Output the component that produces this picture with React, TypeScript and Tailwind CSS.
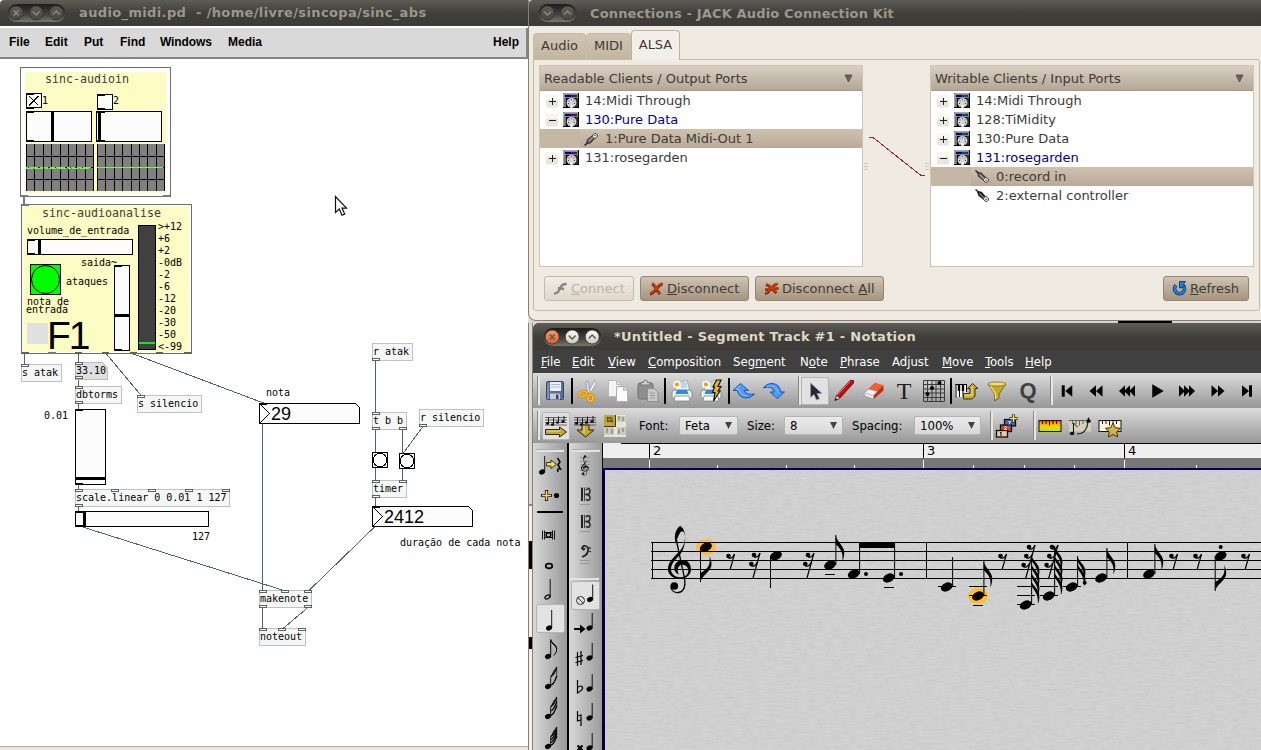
import React from "react";

/* ---------- shared window chrome ---------- */

function WindowButtons({ kinds, active = false }: { kinds: string[]; active?: boolean }) {
  const width = kinds.length * 20 - 2;
  return (
    <svg width={width + 2} height={20} viewBox={`0 0 ${width + 2} 20`} className="shrink-0">
      <defs>
        <linearGradient id="pill" x1="0" y1="0" x2="0" y2="1">
          <stop offset="0" stopColor="#1d1c19" />
          <stop offset="0.6" stopColor="#45443f" />
          <stop offset="1" stopColor="#77766e" />
        </linearGradient>
        <linearGradient id="knobOff" x1="0" y1="0" x2="0" y2="1">
          <stop offset="0" stopColor="#5c5b55" />
          <stop offset="1" stopColor="#484742" />
        </linearGradient>
        <linearGradient id="knobOn" x1="0" y1="0" x2="0" y2="1">
          <stop offset="0" stopColor="#ffffff" />
          <stop offset="1" stopColor="#c9c6bc" />
        </linearGradient>
        <linearGradient id="knobClose" x1="0" y1="0" x2="0" y2="1">
          <stop offset="0" stopColor="#f79a6f" />
          <stop offset="1" stopColor="#e2582b" />
        </linearGradient>
      </defs>
      <rect x="0.5" y="1" width={width} height="18" rx="9" fill="url(#pill)" />
      {kinds.map((kind, i) => {
        const cx = 9.5 + i * 20 - (kinds.length === 3 ? 0.3 : 0);
        const fill = !active ? "url(#knobOff)" : kind === "close" ? "url(#knobClose)" : "url(#knobOn)";
        const stroke = active ? "#5b5a52" : "#8a8980";
        return (
          <g key={kind} transform={`translate(${cx} 10)`}>
            <circle r="7" fill={fill} stroke={active ? "#35342f" : "#33322e"} strokeWidth="0.8" />
            <path
              d={kind === "close" ? "M-2.5 -2.5L2.5 2.5M2.5 -2.5L-2.5 2.5" : kind === "min" ? "M-3.5 -1.5L0 2L3.5 -1.5" : "M-3.5 1.5L0 -2L3.5 1.5"}
              fill="none"
              stroke={stroke}
              strokeWidth="1.5"
            />
          </g>
        );
      })}
    </svg>
  );
}

/* ---------- Pure Data patch ---------- */

const ORIGIN = 59;
const XLET = "#55665a";

type Node = { x: number; y: number; w: number; h: number; text: string; ins: number[]; outs: number[] };

const nodes: Node[] = [
  { x: 21, y: 364, w: 41, h: 18, text: "s atak", ins: [21], outs: [] },
  { x: 75, y: 386, w: 47, h: 18, text: "dbtorms", ins: [75], outs: [75] },
  { x: 137, y: 395, w: 65, h: 18, text: "s silencio", ins: [137], outs: [] },
  { x: 75, y: 489, w: 155, h: 18, text: "scale.linear 0 0.01 1 127", ins: [75, 111, 148, 185, 222], outs: [75] },
  { x: 372, y: 343, w: 41, h: 18, text: "r atak", ins: [], outs: [372] },
  { x: 372, y: 412, w: 35, h: 18, text: "t b b", ins: [372], outs: [372, 399] },
  { x: 419, y: 409, w: 65, h: 18, text: "r silencio", ins: [], outs: [419] },
  { x: 372, y: 480, w: 35, h: 18, text: "timer", ins: [372, 399], outs: [372] },
  { x: 259, y: 590, w: 53, h: 18, text: "makenote", ins: [259, 281, 304], outs: [259, 304] },
  { x: 259, y: 628, w: 47, h: 18, text: "noteout", ins: [259, 278, 298], outs: [] },
];

const labels: [number, number, string][] = [
  [42, 95, "1"], [113, 95, "2"],
  [27, 225, "volume_de_entrada"], [81, 257, "saida~"], [66, 276, "ataques"],
  [27, 296, "nota de"], [26, 304, "entrada"],
  [158, 221, ">+12"], [158, 233, "+6"], [158, 245, "+2"], [158, 257, "-0dB"], [158, 269, "-2"], [158, 281, "-6"],
  [158, 293, "-12"], [158, 305, "-20"], [158, 317, "-30"], [158, 329, "-50"], [158, 341, "<-99"],
  [76, 365, "33.10"], [44, 410, "0.01"], [192, 531, "127"], [266, 387, "nota"], [400, 537, "duração de cada nota"],
];

const wires = [
  [78, 403, 78, 410], [24, 353, 24, 365], [78, 353, 78, 362], [78, 379, 78, 387], [106, 354, 141, 396], [133, 354, 263, 403],
  [78, 484, 78, 490], [78, 506, 78, 512], [79, 526, 285, 591], [262, 423, 262, 590], [375, 361, 375, 413],
  [375, 429, 375, 453], [402, 429, 402, 454], [422, 427, 403, 453], [375, 467, 375, 481], [402, 468, 402, 481],
  [375, 497, 375, 507], [375, 526, 308, 591], [262, 607, 262, 629], [308, 607, 282, 629],
];

const vlines = [0, 8, 17, 25, 34, 42, 50, 59, 67];

function Scope({ x, noisy }: { x: number; noisy: boolean }) {
  return (
    <g>
      <rect x={x} y="144" width="68" height="47" fill="#808080" />
      {vlines.map((v) => <rect key={v} x={x + v} y="144" width="1" height="47" fill="#000" />)}
      {[156, 167, 179].map((y) => <rect key={y} x={x} y={y} width="68" height="1" fill="#000" />)}
      <rect x={x} y="167" width={noisy ? 65 : 66} height="1" fill="#6bfc3a" />
      {noisy && <path d={`M${x + 2} 167.5H${x + 65}`} stroke="#143008" strokeWidth="1" strokeDasharray="1 9 2 3 1 4 2 5" />}
      {noisy && <path d={`M${x} 168.5H${x + 65}`} stroke="#6bfc3a" strokeWidth="1" strokeDasharray="7 1 9 2 3 1" />}
    </g>
  );
}

function Bang({ x, y }: { x: number; y: number }) {
  return (
    <g>
      <rect x={x + 0.5} y={y + 0.5} width="15" height="15" fill="#fcfcfc" stroke="#000" />
      <circle cx={x + 8} cy={y + 8} r="6.8" fill="none" stroke="#000" />
    </g>
  );
}

function NumBox({ x, y }: { x: number; y: number }) {
  return (
    <g fill="none" stroke="#000">
      <path d={`M${x + 0.5} ${y + 0.5}h96l4 4v16h-100z`} fill="#fcfcfc" />
      <path d={`M${x + 1} ${y + 1}l9.5 9.5l-9.5 9.5`} />
      <path d={`M${x} ${y + 1}h8M${x} ${y + 20}h8`} />
    </g>
  );
}

function PatchDrawing() {
  return (
    <svg className="absolute left-0 top-0" width="527" height="687" viewBox="0 59 527 687" shapeRendering="crispEdges">
      <rect x="20.5" y="67.5" width="150" height="129" fill="#fff" stroke="#6e6e6e" />
      <rect x="25" y="72" width="141" height="121" fill="#fcfcc4" />
      <rect x="21" y="195" width="7" height="2" fill="#777788" />
      <rect x="163" y="195" width="7" height="2" fill="#777788" />
      <rect x="23" y="197" width="2" height="9" fill="#777788" />
      <g fill="#fcfcfc" stroke="#000">
        <rect x="26.5" y="93.5" width="15" height="14" />
        <path d="M29 96l9.5 9.5M38.5 96l-9.5 9.5" strokeWidth="1" />
        <rect x="97.5" y="94.5" width="15" height="15" />
        <rect x="26.5" y="111.5" width="65" height="30" />
        <rect x="96.5" y="111.5" width="65" height="30" />
      </g>
      <g fill="#000">
        <rect x="51" y="112" width="3" height="29" />
        <rect x="98" y="112" width="3" height="29" />
        {[26, 97].map((x) => (
          <g key={x}>
            <rect x={x} y={x === 26 ? 93 : 94} width="8" height="2" />
            <rect x={x} y={x === 26 ? 107 : 108} width="8" height="2" />
            <rect x={x} y="111" width="8" height="2" />
            <rect x={x} y="140" width="8" height="2" />
          </g>
        ))}
      </g>
      <Scope x={26} noisy />
      <Scope x={97} noisy={false} />

      <rect x="21.5" y="204.5" width="170" height="149" fill="#fff" stroke="#6e6e6e" />
      <rect x="23" y="206" width="166" height="146" fill="#fcfcc4" />
      <rect x="22" y="204" width="7" height="2" fill="#777788" />
      <rect x="27.5" y="239.5" width="105" height="15" fill="#fcfcfc" stroke="#000" />
      <rect x="38" y="240" width="3" height="14" />
      <rect x="27" y="239" width="8" height="2" />
      <rect x="27" y="253" width="8" height="2" />
      <rect x="30.5" y="264.5" width="30" height="30" fill="#00fc00" stroke="#000" />
      <circle cx="45.5" cy="279.5" r="14" fill="none" stroke="#000" shapeRendering="auto" />
      <rect x="27" y="323" width="21" height="21" fill="#e0e0e0" />
      <rect x="114.5" y="265.5" width="15" height="85" fill="#fcfcfc" stroke="#000" />
      <rect x="115" y="314" width="14" height="3" />
      <rect x="115" y="265" width="7" height="2" />
      <rect x="115" y="349" width="7" height="2" />
      <rect x="138.5" y="225.5" width="17" height="124" fill="#404040" stroke="#000" />
      <rect x="139" y="342" width="16" height="2" fill="#14e814" />
      <g fill="#fff" stroke={XLET}>
        {[22, 75, 102, 130, 156, 184].map((x) => <rect key={x} x={x + 0.5} y="352.5" width="6" height="1" />)}
      </g>
      <rect x="48" y="352" width="8" height="2" fill="#777788" />

      <g stroke={XLET} strokeWidth="1">
        {wires.map(([a, b, c, d]) => <line key={`${a}-${b}-${c}`} x1={a + 0.5} y1={b} x2={c + 0.5} y2={d} />)}
      </g>
      <path d="M75.5 362.5h27l5 5v11.500h-32z" fill="#dfdfdf" stroke="#bcbcbc" />
      <g fill="#fff" stroke={XLET}>
        <rect x="75.500" y="362.5" width="7" height="2" />
        <rect x="75.500" y="376.5" width="7" height="2" />
      </g>
      <rect x="75.500" y="409.5" width="30" height="75" fill="#fcfcfc" stroke="#000" />
      <rect x="76" y="477" width="29" height="3" />
      <rect x="75" y="409" width="8" height="2" />
      <rect x="75" y="483" width="8" height="2" />
      <rect x="75.500" y="511.5" width="133" height="15" fill="#fcfcfc" stroke="#000" />
      <rect x="83" y="512" width="3" height="14" />
      <rect x="75" y="511" width="8" height="2" />
      <rect x="75" y="525" width="8" height="2" />
      <NumBox x={259} y={403} />
      <NumBox x={372} y={506} />
      <Bang x={372} y={452} />
      <Bang x={399} y={453} />
    </svg>
  );
}

function XLets({ node }: { node: Node }) {
  return (
    <>
      {node.ins.map((x) => (
        <i key={`i${x}`} className="absolute h-[3px] w-2 border border-[#55665a] bg-white" style={{ left: x - node.x - 1, top: -1 }} />
      ))}
      {node.outs.map((x) => (
        <i key={`o${x}`} className="absolute h-[3px] w-2 border border-[#55665a] bg-white" style={{ left: x - node.x - 1, top: node.h - 4 }} />
      ))}
    </>
  );
}

function PdWindow() {
  return (
    <section className="flex h-[750px] w-[528px] shrink-0 flex-col bg-white">
      <header className="flex h-[26px] items-center rounded-tl bg-linear-to-b from-[#5d5c56] via-[#403f3a] to-[#3c3b37] pl-[7px] text-[13px] font-bold text-[#9b978c]">
        <WindowButtons kinds={["close", "min", "max"]} />
        <h1 className="ml-[12px] font-['DejaVu_Sans',sans-serif] tracking-[0.36px] whitespace-pre">audio_midi.pd  - /home/livre/sincopa/sinc_abs</h1>
      </header>
      <nav className="mt-[2px] flex h-[31px] items-center border-r-2 border-b-2 border-[#858585] bg-[#d9d9d9] pb-[2px] pr-[7px] pl-[9px] font-['Liberation_Sans',sans-serif] text-[12px] font-bold text-black">
        <span className="w-9">File</span>
        <span className="w-[39px]">Edit</span>
        <span className="w-9">Put</span>
        <span className="w-10">Find</span>
        <span className="w-[68px] tracking-[-0.1px]">Windows</span>
        <span className="flex-1">Media</span>
        <span>Help</span>
      </nav>
      <main className="relative h-[687px] overflow-hidden bg-white font-['DejaVu_Sans_Mono',monospace] text-[10px] leading-[12px] text-black">
        <PatchDrawing />
        {nodes.map((n) => (
          <div
            key={n.text}
            className="absolute border border-[#bfc2c0] bg-[#f5f7f7] pt-[2px] whitespace-pre"
            style={{ left: n.x, top: n.y - ORIGIN, width: n.w, height: n.h }}
          >
            {n.text}
            <XLets node={n} />
          </div>
        ))}
        {labels.map(([x, y, text]) => (
          <span key={`${x}-${y}`} className="absolute whitespace-pre" style={{ left: x, top: y - ORIGIN }}>{text}</span>
        ))}
        <span className="absolute top-[14px] left-[45px] text-[11.63px] text-[#404040]">sinc-audioin</span>
        <span className="absolute top-[148px] left-[42px] text-[11.63px] text-[#404040]">sinc-audioanalise</span>
        <span className="absolute top-[257px] left-[47px] font-['Liberation_Sans',sans-serif] text-[39px] leading-[39px] tracking-[-2px]">F1</span>
        <span className="absolute top-[346px] left-[271px] font-['Liberation_Sans',sans-serif] text-[18px] leading-[18px]">29</span>
        <span className="absolute top-[449px] left-[384px] font-['Liberation_Sans',sans-serif] text-[18px] leading-[18px]">2412</span>
        <svg className="absolute top-[136px] left-[334px]" width="14" height="22" viewBox="0 0 14 22">
          <path d="M1.500 1.500v16l3.800-3.500l2.700 6.300l2.700-1.200l-2.700-6h4.500z" fill="#fff" stroke="#111" strokeWidth="1.2" />
        </svg>
      </main>
      <footer className="h-[4px] border-t border-[#b5ad9f] bg-[#ece8e0]" />
    </section>
  );
}

/* ---------- JACK connections ---------- */

function DeviceIcon({ led }: { led: string }) {
  return (
    <svg width="16" height="16" viewBox="0 0 16 16" className="shrink-0">
      <rect width="16" height="15" fill="#000" />
      <path d="M0.500 14V0.500H15" fill="none" stroke="#a8a8a8" />
      <rect x="1" y="1" width="14" height="4" fill="#8c8c8c" />
      <rect x="2" y="2" width="12" height="2" fill="#000090" />
      <path d="M8 3h5.500" stroke={led} strokeWidth="1.200" strokeDasharray="1.500 0.700" />
      <rect x="1" y="5" width="2" height="9" fill="#777" />
      <rect x="13.500" y="5" width="1" height="9" fill="#666" />
      <circle cx="8.500" cy="9.800" r="4.900" fill="#d4d4d4" />
      {[[6, 8], [8.500, 6.700], [11, 8], [5.600, 10.500], [11.400, 10.500]].map(([x, y]) => (
        <rect key={`${x}${y}`} x={x - 0.500} y={y - 0.500} width="0.900" height="0.900" fill="#222" />
      ))}
      <rect x="7.300" y="12" width="2.500" height="3.500" fill="#f0f0f0" />
      <path d="M6 13.500l1.300 1M11 13.500l-1.300 1" stroke="#333" strokeWidth="0.700" />
    </svg>
  );
}

function PlugIcon({ flip, dark }: { flip: boolean; dark?: boolean }) {
  return (
    <svg width="16" height="16" viewBox="0 0 16 16" className="shrink-0">
      <g transform={flip ? "matrix(1 0 0 -1 0 16)" : undefined}>
        <path d="M1.500 14.500l3-2.500" stroke="#222" strokeWidth="1.600" />
        <path d="M3.500 12.500l1-4l4.500-3.500l2.500 2.500l-4 4.500z" fill={dark ? "#181818" : "#555"} stroke="#222" strokeWidth="0.800" />
        <path d="M9 5l2.500-2.500h1.500l1.500 1.500v1.500l-3 2.500z" fill="#ddd" stroke="#333" strokeWidth="0.900" />
        <path d="M5.500 10.500l4.500-4.500" stroke={dark ? "#888" : "#aaa"} strokeWidth="1.100" />
        <path d="M11.500 4l1 1" stroke="#222" />
      </g>
    </svg>
  );
}

function Expander({ open }: { open: boolean }) {
  return (
    <svg width="12" height="13" viewBox="0 0 12 13" className="mt-px shrink-0">
      <rect width="12" height="12.500" rx="1.500" fill="#ebe6dd" />
      <rect width="12" height="5" rx="1.500" fill="#f8f6f2" />
      <path d={open ? "M3 6.500h7" : "M3 6.500h7M6.500 3v7"} stroke="#222" strokeWidth="1" />
    </svg>
  );
}

type Port = { text: string; kind: "client" | "open" | "port" | "selected" };

function PortList({ title, ports, output }: { title: string; ports: Port[]; output?: boolean }) {
  return (
    <div className="h-[202px] w-[324px] shrink-0 border border-[#cfc4b1] bg-white">
      <div className="flex h-[25px] items-center justify-between border-b border-[#a89984] bg-linear-to-b from-[#d9cfc3] to-[#b5a795] pr-[9px] pl-[4px]">
        <span>{title}</span>
        <svg width="9" height="9" viewBox="0 0 9 9"><path d="M1 1h7l-3.500 7z" fill="#6b655c" stroke="#4c4842" strokeWidth="0.800" /></svg>
      </div>
      {ports.map((p) =>
        p.kind === "client" || p.kind === "open" ? (
          <div key={p.text} className="flex h-[19px] items-center pl-[6px]">
            <Expander open={p.kind === "open"} />
            <span className="ml-[5px] flex"><DeviceIcon led={output ? "#f02020" : "#20e020"} /></span>
            <span className={p.kind === "open" ? "ml-[6px] text-[#000090]" : "ml-[6px]"}>{p.text}</span>
          </div>
        ) : (
          <div
            key={p.text}
            className={
              p.kind === "selected"
                ? "flex h-[19px] items-center bg-[#c4b7a5] bg-[linear-gradient(to_right,#c4b7a4_40px,transparent_40px),linear-gradient(to_bottom,#cfc1ae,#b9ab98)] pl-[43px]"
                : "flex h-[19px] items-center pl-[43px]"
            }
          >
            <PlugIcon flip={!output} dark={p.kind === "port"} />
            <span className="ml-[6px]">{p.text}</span>
          </div>
        )
      )}
    </div>
  );
}

function Grip({ className }: { className: string }) {
  return (
    <svg width="4" height="8" viewBox="0 0 4 8" className={className}>
      <path d="M0 0.500h4M0 3.500h4M0 6.500h4" stroke="#d0c8b8" />
    </svg>
  );
}

function PlugX({ kind }: { kind: string }) {
  if (kind === "refresh")
    return (
      <svg width="15" height="15" viewBox="0 0 15 15">
        <path d="M4 4.200A5 5 0 1 0 11 4.200" fill="none" stroke="#0c2d5a" strokeWidth="3.600" />
        <path d="M4 4.200A5 5 0 1 0 11 4.200" fill="none" stroke="#1685e8" strokeWidth="2.200" />
        <path d="M7.500 0.500h6l-2 2.500l1 2.500l-5 1.500z" fill="#1780e0" stroke="#0c2d5a" strokeWidth="0.800" />
      </svg>
    );
  const color = kind === "connect" ? "#858585" : "#d63c08";
  return (
    <svg width="15" height="15" viewBox="0 0 15 15">
      {kind === "connect" && <path d="M1 12.500c4 0 4-1.500 6-5s2-4.500 6.500-4.500M5 7l6 1" fill="none" stroke={color} strokeWidth="2.300" />}
      {kind === "disconnect" && (
        <g fill="none">
          <path d="M1 13c3-0.500 4-2 6-4.500s3-5 6.500-5.500M3 3c2 0.500 3 2.500 4.500 5s2 3.500 3.500 5" stroke="#5a1a08" strokeWidth="3" />
          <path d="M1 12.500c3-0.500 4-2 6-4.500s3-5 6.500-5.500M3 2.500c2 0.500 3 2.500 4.500 5s2 3.500 3.500 5" stroke={color} strokeWidth="2" />
        </g>
      )}
      {kind === "all" && (
        <g fill="none">
          <path d="M1 12.500c4 0 3-2.500 6-5s2-4 6.500-4.500M2 3.500c2 0.500 4 2 5.500 4s3 2.500 5 4.500M1 8.500h5M8.500 7.500h6" stroke="#5a1a08" strokeWidth="2.700" />
          <path d="M1 12c4 0 3-2.500 6-5s2-4 6.500-4.500M2 3c2 0.500 4 2 5.500 4s3 2.500 5 4.500M1 8h5M8.500 7h6" stroke={color} strokeWidth="1.700" />
        </g>
      )}
    </svg>
  );
}

function JackButton({ className, kind, children }: { className: string; kind: string; children: React.ReactNode }) {
  const look =
    kind === "connect"
      ? "border-[#c5baa8] from-[#f1ede5] to-[#dfd8cd] text-[#bfb29c]"
      : "border-[#94866f] from-[#cfc3b3] to-[#a59580] text-[#3c3b37]";
  return (
    <button className={`flex h-[25px] shrink-0 items-center rounded-[3px] border bg-linear-to-b pl-[8px] ${look} ${className}`}>
      <PlugX kind={kind} />
      <span className="ml-[3px] whitespace-nowrap">{children}</span>
    </button>
  );
}

function JackWindow() {
  return (
    <section className="h-[321px] rounded-bl-lg border-b border-l border-[#8d8069] bg-[#efebe3] font-['DejaVu_Sans',sans-serif] text-[13px] leading-[19px] text-[#3c3b37]">
      <header className="flex h-[26px] items-center rounded-tl bg-linear-to-b from-[#5d5c56] via-[#403f3a] to-[#3c3b37] pl-[9px] font-bold text-[#9b978c]">
        <WindowButtons kinds={["min", "max"]} />
        <h1 className="ml-[12px] tracking-[0.16px]">Connections - JACK Audio Connection Kit</h1>
      </header>
      <div className="flex h-[34px] items-end pl-[4px]">
        <div className="flex h-[27px] w-[53px] items-center justify-center rounded-t border border-b-0 border-[#c9bca7] bg-linear-to-b from-[#d0c5b4] to-[#c3b59f] pb-[3px]">Audio</div>
        <div className="flex h-[27px] w-[45px] items-center justify-center rounded-t border border-b-0 border-[#c9bca7] bg-linear-to-b from-[#d0c5b4] to-[#c3b59f] pb-[3px]">MIDI</div>
        <div className="relative z-10 flex h-[30px] w-[49px] items-center justify-center rounded-t border border-b-0 border-[#c0b298] bg-[#f2efe9] pb-[2px]">ALSA</div>
      </div>
      <div className="relative -mt-px ml-[4px] h-[252px] w-[727px] rounded-b-[3px] rounded-tr-[3px] border border-[#c8bba4] pt-[5px] pl-[5px]">
        <div className="flex">
          <PortList
            title="Readable Clients / Output Ports"
            output
            ports={[
              { text: "14:Midi Through", kind: "client" },
              { text: "130:Pure Data", kind: "open" },
              { text: "1:Pure Data Midi-Out 1", kind: "selected" },
              { text: "131:rosegarden", kind: "client" },
            ]}
          />
          <div className="flex w-[67px] items-start pt-[98px]">
            <Grip className="ml-px" />
            <svg width="57" height="50" viewBox="0 0 57 50" className="-mt-[30px]" shapeRendering="crispEdges">
              <path d="M1 4.500h4l48 38h4" fill="none" stroke="#902828" />
            </svg>
            <Grip className="" />
          </div>
          <PortList
            title="Writable Clients / Input Ports"
            ports={[
              { text: "14:Midi Through", kind: "client" },
              { text: "128:TiMidity", kind: "client" },
              { text: "130:Pure Data", kind: "client" },
              { text: "131:rosegarden", kind: "open" },
              { text: "0:record in", kind: "selected" },
              { text: "2:external controller", kind: "port" },
            ]}
          />
        </div>
        <div className="mt-[9px] flex pl-[5px]">
          <JackButton kind="connect" className="w-[90px]"><u>C</u>onnect</JackButton>
          <JackButton kind="disconnect" className="ml-[6px] w-[109px]"><u>D</u>isconnect</JackButton>
          <JackButton kind="all" className="ml-[6px] w-[129px]">Disconnect <u>A</u>ll</JackButton>
          <JackButton kind="refresh" className="ml-[279px] w-[86px]"><u>R</u>efresh</JackButton>
        </div>
      </div>
    </section>
  );
}

/* ---------- Rosegarden toolbars ---------- */

function MiniNote({ x, y, top = 17, open = false }: { x: number; y: number; top?: number; open?: boolean }) {
  return (
    <g>
      <ellipse cx={x} cy={y} rx={open ? 2.700 : 3.100} ry={open ? 1.700 : 2.400} transform={`rotate(-25 ${x} ${y})`} fill={open ? "none" : "#000"} stroke={open ? "#000" : "none"} strokeWidth="1.200" />
      <path d={`M${x + 2.700} ${y}V${y - top}`} stroke="#000" strokeWidth="0.900" />
    </g>
  );
}

function FlaggedNote({ x, y, n }: { x: number; y: number; n: number }) {
  const sx = x + 2.700;
  return (
    <g>
      <ellipse cx={x} cy={y} rx="3.100" ry="2.500" transform={`rotate(-25 ${x} ${y})`} />
      {n === 1 ? (
        <path d={`M${sx} ${y}V${y - 17}c0.500 3.500 6 5 6 9.500c0 2.500-1 4.500-3 6.500M${sx} ${y - 16}c1.500 4 5 5 6 8`} fill="none" stroke="#000" strokeWidth="1" />
      ) : (
        <g fill="none" stroke="#000">
          <path d={`M${sx} ${y}V${y - 9}L${sx + 4} ${y - 17}`} strokeWidth="0.900" />
          {Array.from({ length: n }, (_, i) => {
            const sy = y - 1 - (i * 9) / (n - 1);
            return <path key={i} d={`M${sx} ${sy}c3.500-1.500 4.500-5 6-9.500`} strokeWidth="1.300" />;
          })}
          <path d={`M${sx + 6} ${y - 19}V${y - 9}`} strokeWidth="0.700" />
        </g>
      )}
    </g>
  );
}

const S = ({ children, w = 24, h = 24 }: { children: React.ReactNode; w?: number; h?: number }) => (
  <svg width={w} height={h} viewBox={`0 0 ${w} ${h}`}>{children}</svg>
);

const SaveIcon = () => (
  <S>
    <rect x="2.500" y="2.500" width="17" height="18" rx="1" fill="#5a6c9c" stroke="#34446e" />
    <rect x="6" y="3" width="11" height="9" fill="#eef2fa" />
    <path d="M7 5.500h9M7 8h9" stroke="#aab6d0" />
    <rect x="6" y="14.500" width="10" height="6" fill="#c8ccd8" />
    <rect x="12" y="15.500" width="2.500" height="4.500" fill="#334570" />
    <path d="M4 4v16" stroke="#9aaed8" />
  </S>
);
const CutIcon = () => (
  <S>
    <path d="M12 14L18.500 1.500L20 5L13.500 15z" fill="#f8f8ff" stroke="#8890a0" strokeWidth="0.700" />
    <path d="M11.500 14L9.500 3L12 2L14 13z" fill="#d8e0ec" stroke="#8890a0" strokeWidth="0.700" />
    <ellipse cx="7" cy="15" rx="4" ry="2.400" transform="rotate(-12 7 15)" fill="none" stroke="#c27c00" strokeWidth="3" />
    <ellipse cx="7" cy="15" rx="4" ry="2.400" transform="rotate(-12 7 15)" fill="none" stroke="#ffb91c" strokeWidth="1.800" />
    <ellipse cx="14.500" cy="19" rx="2.600" ry="3.200" fill="none" stroke="#c27c00" strokeWidth="3" />
    <ellipse cx="14.500" cy="19" rx="2.600" ry="3.200" fill="none" stroke="#ffb91c" strokeWidth="1.800" />
  </S>
);
const CopyIcon = () => (
  <S>
    <path d="M2.500 1.500h8l4 4v12h-12z" fill="#f4f4f4" stroke="#b8b8b8" />
    <path d="M10.500 1.500v4h4" fill="#ddd" stroke="#b8b8b8" />
    <path d="M10.500 7.500h7l4 4v11h-11z" fill="#fbfbfb" stroke="#b0b0b0" />
    <path d="M17.500 7.500v4h4" fill="#ddd" stroke="#b8b8b8" />
  </S>
);
const PasteIcon = () => (
  <S>
    <rect x="2" y="4" width="15" height="16" rx="2" fill="#8e8e8e" stroke="#707070" />
    <path d="M5 6V3.500h2.500q0-2.500 2-2.500t2 2.500h2.500V6z" fill="#d0d0d0" stroke="#777" />
    <path d="M11.500 9.500h7l3.500 3.500v9.500h-10.500z" fill="#c8c8c8" stroke="#909090" />
    <path d="M14 14h5M14 16.500h5M14 19h5" stroke="#999" />
  </S>
);
const PrintIcon = ({ bolt }: { bolt?: boolean }) => (
  <S>
    <path d="M5 5l12-4l2.500 10h-14z" fill="#f4f6f2" stroke="#889" strokeWidth="0.600" />
    <rect x="11" y="3" width="6" height="6" fill="#b9d8ef" />
    <path d="M3 5.500h8M7 1.500v8M4 2.800l6 5.500M10 2.800L4 8.300" stroke="#fff" strokeWidth="2" />
    <circle cx="7" cy="5.500" r="2.100" fill="#e8a010" />
    <rect x="2" y="11" width="20" height="9" rx="3" fill="#eceff4" stroke="#7c8490" strokeWidth="0.800" />
    <path d="M7 11h10l1.500 4h-13z" fill="#2a8de0" />
    <path d="M5 17h14l1 5h-16z" fill="#fafcff" stroke="#7c8490" strokeWidth="0.800" />
    {bolt && <path d="M17.500 1h4.500l-3 6.500h3l-3 4.500h2l-6.500 10l1.500-8.500h-2.500l2-5.500h-1.500z" fill="#f4b414" stroke="#111" strokeWidth="1.200" />}
  </S>
);
const UndoIcon = ({ redo }: { redo?: boolean }) => (
  <S>
    {redo ? (
      <g>
        <path d="M15.500 19.500L22.500 13h-4q-0.500-8-8.500-8.500q-5.500 0-8.500 4.500q4-1.500 7-0.500t3.500 4.500h-4z" fill="#4a9af8" stroke="#1854b8" />
        <path d="M5 7.500q9-3 11.500 6.500" fill="none" stroke="#8cc4ff" />
      </g>
    ) : (
      <g>
        <path d="M8.500 4.500L1 11.500h4.500q1 7 8.500 7.500q5.500 0 8.500-4q-4 1-7-0.200t-3.500-3.300h4.500z" fill="#4a9af8" stroke="#1854b8" />
        <path d="M8.500 6.500L4 10.500h3q1.500 6 8 6.500" fill="none" stroke="#8cc4ff" />
      </g>
    )}
  </S>
);
const PencilIcon = () => (
  <S>
    <path d="M3 21.500l1.500-5l13.500-15h3.500v2.500l-13.500 15z" fill="#c00d10" stroke="#600" strokeWidth="0.800" />
    <path d="M5.500 16L18.500 2" stroke="#f87070" strokeWidth="1" />
    <path d="M3 21.500l1.500-5l3.500 2.500z" fill="#e8d0b0" stroke="#503020" strokeWidth="0.600" />
    <path d="M3 21.500l0.700-2.300l1.500 1.300z" />
  </S>
);
const EraserIcon = () => (
  <S>
    <path d="M2 14L13 4l8.500 2.500V11.500L12 20l-9.500-3z" fill="#b83410" />
    <path d="M2 14L13 4l8.500 2.500L11.500 15.500z" fill="#f85a32" />
    <path d="M2 14l4.500-4l9 2.500L11.500 16.200V20l-9-3z" fill="#f2f2f2" stroke="#999" strokeWidth="0.800" />
    <path d="M2 14l9.500 2.500" stroke="#bbb" />
  </S>
);
const PointerIcon = () => (
  <S>
    <path d="M7.500 4v14.500l3.500-3l2.500 5.500l3-1.300l-2.500-5.200h5z" fill="#25283c" stroke="#999" strokeWidth="0.900" />
  </S>
);
const ChordGrid = () => (
  <S>
    <path d="M1.500 1.500h21v21h-21zM1.500 5.500h21M1.500 10h21M1.500 14h21M1.500 18.500h21M5.500 1.500v21M10 1.500v21M14 1.500v21M18.500 1.500v21" fill="none" stroke="#3c3c3c" />
    <circle cx="17.500" cy="4" r="2" /><circle cx="10" cy="9" r="2" /><circle cx="5.500" cy="15" r="2" />
  </S>
);
const PianoIcon = () => (
  <S>
    <rect x="0.500" y="5" width="11" height="13" fill="#fff" />
    <path d="M1 5v13.500M4.500 11v7M8 11v7M11.500 5v8M0.500 5.500h11" stroke="#000" />
    <path d="M4 5v7M8 5v7" stroke="#000" strokeWidth="2.400" />
    <path d="M8.500 14.500h6.500v-5h-2.500l5-5l5.500 5h-3v7.500l-3 3H8.500z" fill="#cbb032" stroke="#352e10" />
    <path d="M9.500 16h7.500V8" fill="none" stroke="#f0e088" />
  </S>
);
const FunnelIcon = () => (
  <S>
    <path d="M3 5q9 3.500 18 0L14 15v4.500l-4.500 2.500V15z" fill="#c8a628" stroke="#6e5810" strokeWidth="0.800" />
    <path d="M5 6.500L10.500 15v5" fill="none" stroke="#f4e48c" strokeWidth="1.300" />
    <ellipse cx="12" cy="5" rx="9" ry="2" fill="#f1dd7a" stroke="#85701c" strokeWidth="0.800" />
  </S>
);
const paths: Record<string, string> = {
  start: "M0 0h3v11.500H0zM10.500 0v11.500L3.500 5.800z",
  rew: "M6.500 0v11.500L0 5.800zM13 0v11.500L6.500 5.800z",
  rew3: "M6 0v11.500L0 5.800zM11 0v11.500L5 5.800zM16 0v11.500L10 5.800z",
  play: "M0 -1v13.500L11.500 5.800z",
  fwd3: "M0 0v11.500L6 5.800zM5 0v11.500L11 5.800zM10 0v11.500L16 5.800z",
  fwd: "M0 0v11.500L6.500 5.800zM6.500 0v11.500L13 5.800z",
  end: "M0 0v11.500L7 5.800zM7 0h3v11.500H7z",
};
const widths: Record<string, number> = { start: 10.500, rew: 13, rew3: 16, play: 11.500, fwd3: 16, fwd: 13, end: 10 };
const Transport = ({ kind }: { kind: string }) => (
  <S w={20}><path d={paths[kind]} transform={`translate(${10 - widths[kind] / 2} 6.200)`} /></S>
);

const Sep = () => <i className="h-[26px] w-[2px] shrink-0 bg-black" />;
const Handle = () => <i className="h-[29px] w-[3px] shrink-0 border-l border-[#888] bg-[#e6e6e6]" />;

function Cell({ c, children }: { c: string; children: React.ReactNode }) {
  return <div className={`flex h-[30px] shrink-0 items-center justify-center ${c}`}>{children}</div>;
}

function MiniStaff() {
  return (
    <g>
      <path d="M1 3.500h22M1 6h22M1 8.500h22M1 11h22" stroke="#333" strokeWidth="0.700" />
      <path d="M4.500 9V3M9.500 10V4M14.500 8V2.500M20 7V2" stroke="#111" strokeWidth="0.900" />
      <ellipse cx="3.500" cy="9.500" rx="1.500" ry="1.200" /><ellipse cx="8.500" cy="10.500" rx="1.500" ry="1.200" />
      <ellipse cx="13.500" cy="8.500" rx="1.500" ry="1.200" /><ellipse cx="19" cy="7.500" rx="1.500" ry="1.200" />
    </g>
  );
}

function Combo({ className, value }: { className: string; value: string }) {
  return (
    <div className={`flex h-[19px] shrink-0 items-center justify-between rounded-[2px] border border-[#b4b4b4] bg-linear-to-b from-[#ebebeb] to-[#d8d8d8] pr-[4px] pl-[5px] ${className}`}>
      <span>{value}</span>
      <svg width="9" height="9" viewBox="0 0 9 9"><path d="M1 1h7l-3.500 7z" fill="#444" /></svg>
    </div>
  );
}

function ToolbarMain() {
  return (
    <div className="flex h-[35px] items-center bg-linear-to-b from-[#dcdcdc] to-[#989898]">
      <Cell c="w-[8px] pl-[2px]"><Handle /></Cell>
      <Cell c="w-[29px]"><SaveIcon /></Cell>
      <Cell c="w-[4px]"><Sep /></Cell>
      <Cell c="w-[27px]"><CutIcon /></Cell>
      <Cell c="w-[33px]"><CopyIcon /></Cell>
      <Cell c="w-[27px]"><PasteIcon /></Cell>
      <Cell c="w-[8px]"><Sep /></Cell>
      <Cell c="w-[25px]"><PrintIcon /></Cell>
      <Cell c="w-[33px]"><PrintIcon bolt /></Cell>
      <Cell c="w-[3px]"><Sep /></Cell>
      <Cell c="w-[27px]"><UndoIcon /></Cell>
      <Cell c="w-[34px]"><UndoIcon redo /></Cell>
      <Cell c="w-[10px] pl-[6px]"><Handle /></Cell>
      <div className="flex h-[28px] w-[28px] shrink-0 items-center justify-center rounded-[2px] border border-[#b4b4b4] bg-[#e2e2e2]"><PointerIcon /></div>
      <Cell c="w-[30px]"><PencilIcon /></Cell>
      <Cell c="w-[30px]"><EraserIcon /></Cell>
      <Cell c="w-[30px] font-['Liberation_Serif',serif] text-[24px] text-[#1c1c1c]">T</Cell>
      <Cell c="w-[30px]"><ChordGrid /></Cell>
      <Cell c="w-[4px]"><Sep /></Cell>
      <Cell c="w-[27px]"><PianoIcon /></Cell>
      <Cell c="w-[33px]"><FunnelIcon /></Cell>
      <Cell c="w-[30px] pb-px font-['Liberation_Sans',sans-serif] text-[22px] font-bold text-[#404040]">Q</Cell>
      <Cell c="w-[10px] pl-[6px]"><Handle /></Cell>
      <Cell c="w-[28px]"><Transport kind="start" /></Cell>
      <Cell c="w-[30px]"><Transport kind="rew" /></Cell>
      <Cell c="w-[32px]"><Transport kind="rew3" /></Cell>
      <Cell c="w-[30px]"><Transport kind="play" /></Cell>
      <Cell c="w-[28px]"><Transport kind="fwd3" /></Cell>
      <Cell c="w-[34px]"><Transport kind="fwd" /></Cell>
      <Cell c="w-[24px]"><Transport kind="end" /></Cell>
    </div>
  );
}

function RulerBase({ fill }: { fill: string }) {
  return (
    <>
      <rect x="1" y="6.500" width="22" height="11" fill={fill} stroke="#000" strokeWidth="0.900" />
      <path d="M4.500 7v3M8 7v3M11.500 7v4.500M15 7v3M18.500 7v3" stroke="#000" strokeWidth="0.900" />
    </>
  );
}

function ToolbarLayout() {
  return (
    <div className="flex h-[35px] items-center bg-linear-to-b from-[#dcdcdc] to-[#989898] text-[13px] text-black">
      <Cell c="w-[9px] pl-[2px]"><Handle /></Cell>
      <div className="flex h-[28px] w-[28px] shrink-0 items-center justify-center rounded-[2px] border border-[#b4b4b4] bg-[#dfdfdf]">
        <S><MiniStaff /><path d="M1.500 15.500h14v-2.500l7 5l-7 5v-2.500h-14z" fill="#c4a92c" stroke="#2e270c" /><path d="M2.500 17h14" stroke="#eedf80" /></S>
      </div>
      <Cell c="w-[30px]">
        <S><MiniStaff /><path d="M9 11h7v5h5l-8.500 7l-8.500-7h5z" fill="#c4a92c" stroke="#2e270c" /><path d="M11 12v7" stroke="#eedf80" /></S>
      </Cell>
      <Cell c="w-[30px]">
        <S>
          <rect x="1" y="1" width="22" height="22" fill="#e4e4da" />
          <rect x="1" y="1" width="11" height="11" fill="#c8a820" />
          <path d="M1 3h10M1 5h10M1 7h10M14 3h9M14 5h9M14 7h9M1 14h10M1 16h10M1 18h10M1 20h10M14 14h9M14 16h9M14 18h9M14 20h9" stroke="#99947c" strokeWidth="0.600" />
          <path d="M4.500 3v5M9 4v5M16 2v4M20 3v4M4 14v5M9 15v5M16 15v5M20 14v4" stroke="#555" strokeWidth="0.800" />
          <path d="M4 7h6M4 4h5" stroke="#222" />
          <path d="M12.500 1v11.500H1" fill="none" stroke="#333" />
        </S>
      </Cell>
      <span className="ml-[9px] w-[40px] shrink-0">Font:</span>
      <Combo className="w-[59px]" value="Feta" />
      <span className="ml-[9px] w-[37px] shrink-0">Size:</span>
      <Combo className="w-[59px]" value="8" />
      <span className="ml-[9px] w-[62px] shrink-0">Spacing:</span>
      <Combo className="w-[67px]" value="100%" />
      <Cell c="w-[14px] pl-[6px]"><Handle /></Cell>
      <Cell c="w-[24px]">
        <S>
          <rect x="9.500" y="5.500" width="11" height="6.500" fill="#3468d8" stroke="#111" strokeWidth="1.300" />
          <rect x="5.500" y="11" width="11" height="6.500" fill="#d04a24" stroke="#111" strokeWidth="1.300" />
          <rect x="1.500" y="16.500" width="11" height="6.500" fill="#e8cfa0" stroke="#111" strokeWidth="1.300" />
          <path d="M6 18v4M5 19l1-1" stroke="#000" />
          <path d="M9.500 13q2-1 2 0.500l-2 2h2.500M13.500 7.500h2l-1.500 3" fill="none" stroke="#fff" strokeWidth="0.900" />
          <path d="M18.500 0.500v8M14.500 4.500h8" stroke="#222" strokeWidth="3.200" />
          <path d="M18.500 1v7M15 4.500h7" stroke="#f6de50" strokeWidth="1.600" />
        </S>
      </Cell>
      <Cell c="w-[18px] pl-[12px]"><Handle /></Cell>
      <Cell c="ml-px w-[24px]">
        <S>
          <defs><linearGradient id="hot" x1="0" y1="0" x2="0" y2="1"><stop offset="0" stopColor="#ff5a00" /><stop offset="0.500" stopColor="#ffd000" /><stop offset="1" stopColor="#b0f000" /></linearGradient></defs>
          <RulerBase fill="url(#hot)" />
        </S>
      </Cell>
      <Cell c="ml-[6px] w-[24px]">
        <S>
          <rect x="1" y="6.500" width="22" height="11" fill="#d6cfbc" />
          <path d="M1 6.500h22M4.500 7v3M8 7v3M11.500 7v4.500M15 7v3" stroke="#555" strokeWidth="0.900" />
          <path d="M5.500 19V9l4 4" fill="none" stroke="#111" /><ellipse cx="4" cy="19.500" rx="2.200" ry="1.700" />
          <path d="M9 20q10 0 11-13" fill="none" stroke="#222" strokeWidth="1.200" /><path d="M20.500 3l2.500 5.500h-5z" />
        </S>
      </Cell>
      <Cell c="ml-[6px] w-[24px]">
        <S>
          <RulerBase fill="#fdf6dc" />
          <path d="M15 9l2.300 4.700l5.200 0.600l-3.800 3.600l1 5.100l-4.700-2.500l-4.700 2.500l1-5.100l-3.800-3.600l5.200-0.600z" fill="#d4b43a" stroke="#3c3210" />
        </S>
      </Cell>
    </div>
  );
}

/* ---------- Note palettes ---------- */

function TrebleClef({ transform }: { transform: string }) {
  return (
    <g transform={transform}>
      <path d="M451 257C472 272 468 310 452 330C430 354 414 366 414 388C414 408 435 418 450 417C470 416 483 405 483 388C483 370 472 360 457 360C442 361 433 372 433 384C433 396 441 402 447 403C441 396 441 376 456 374C468 374 475 382 475 392C475 403 464 412 450 412C436 412 423 402 423 388C423 370 438 357 450 344C466 324 470 290 461 276C456 270 451 276 447 284C442 294 440 298 442 308L437 310C430 282 440 265 451 257Z" />
      <path d="M439 300L463 412C470 448 454 459 441 458C430 457 423 449 423 440" fill="none" stroke="#000" strokeWidth="4" />
      <circle cx="433" cy="438" r="11.500" />
    </g>
  );
}

function Palette({ children }: { children: React.ReactNode }) {
  return (
    <div className="w-[34px] shrink-0 bg-linear-to-r from-[#d8d8d8] to-[#9a9a9a] pt-[6px]">
      <i className="mx-auto block h-[3px] w-[28px] border-t border-[#aaa] bg-[#e4e4e4]" />
      {children}
    </div>
  );
}

function DurationPalette() {
  return (
    <Palette>
      <svg width="34" height="298" viewBox="533 452 34 298">
        <rect x="536.500" y="604.500" width="28" height="28" rx="2" fill="#e2e2e2" stroke="#b2b2b2" />
        <MiniNote x={542} y={472} top={16} />
        <path d="M546.500 462.500h4.500v-2.500l5.500 4.200l-5.500 4.300v-2.500h-4.500z" fill="#f6dc48" stroke="#222" strokeWidth="0.900" />
        <path d="M557.500 458l2.500 4l-2 3l2.500 4q-4-1-2.500 3" fill="none" stroke="#000" strokeWidth="1.500" />
        <path d="M546.500 490v11M541 495.500h11" stroke="#222" strokeWidth="3.200" />
        <path d="M546.500 491v9M542 495.500h9" stroke="#f6de50" strokeWidth="1.500" />
        <circle cx="556.500" cy="495.500" r="2.600" />
        <rect x="537" y="511" width="26" height="2" />
        <path d="M542.500 530.500v9M544.500 530.500v9M552.500 530.500v9M554.500 530.500v9" stroke="#000" strokeWidth="0.900" />
        <path d="M545 532.500h7M545 537.500h7" stroke="#000" strokeWidth="1" />
        <ellipse cx="548.500" cy="535" rx="2.300" ry="2.300" fill="none" stroke="#000" strokeWidth="1.500" />
        <ellipse cx="549" cy="566" rx="3.300" ry="2.300" fill="none" stroke="#000" strokeWidth="1.700" />
        <MiniNote x={547.500} y={597} top={18} open />
        <MiniNote x={549} y={628} top={18} />
        <FlaggedNote x={548} y={656.500} n={1} />
        <FlaggedNote x={548} y={686.500} n={2} />
        <FlaggedNote x={548} y={716.500} n={3} />
        <FlaggedNote x={548} y={746.500} n={4} />
      </svg>
    </Palette>
  );
}

function AccidentalPalette() {
  return (
    <Palette>
      <svg width="34" height="298" viewBox="569 452 34 298">
        <path d="M580 457.500h10M580 461.500h10M580 464.500h10M580 467.500h10M580 470.500h10M580 487.500h10M580 504.500h10M580 515.500h10M580 531.500h10M580 548.500h10M580 560.500h10M580 563.500h10" stroke="#8e8e8e" strokeWidth="0.800" />
        <TrebleClef transform="translate(535.500 428.500) scale(0.110 0.103)" />
        {[494, 521].map((y) => (
          <g key={y} transform={`translate(581 ${y - 6})`} fill="none" stroke="#222">
            <path d="M1 0v13" strokeWidth="2" /><path d="M3.500 0v13" strokeWidth="0.800" />
            <path d="M5 2q4-3 4 1t-4 3.500q4 0 4 3.500t-4 1.500M4 6.500h2.500" strokeWidth="1.500" />
          </g>
        ))}
        <path d="M582 549q0-3.500 3.500-3t2.500 5t-6 6" fill="none" stroke="#222" strokeWidth="1.700" />
        <circle cx="583.500" cy="549" r="1.500" fill="#222" /><circle cx="590" cy="548" r="0.800" /><circle cx="590" cy="551.500" r="0.800" />
        <rect x="570" y="578" width="29" height="2" fill="#e4e4e4" />
        <rect x="571.500" y="581.500" width="28" height="28" rx="2" fill="#e2e2e2" stroke="#b2b2b2" />
        <circle cx="580.500" cy="600.500" r="4" fill="none" stroke="#333" /><path d="M577.500 597.500l6 6" stroke="#333" />
        <MiniNote x={590} y={599.500} top={15} />
        <path d="M574 629h8" stroke="#000" strokeWidth="2" /><path d="M580 624.500l5.500 4.500l-5.500 4.500z" />
        <MiniNote x={589.500} y={628} top={15} />
        <path d="M577.500 652v14M581 651v14M575.500 657.500l7.500-2M575.500 662.500l7.500-2" stroke="#000" strokeWidth="1.200" />
        <MiniNote x={589.500} y={658} top={15} />
        <path d="M577.500 680v13q8-4.500 3.500-7q-2 0-3.500 1.500" fill="none" stroke="#000" strokeWidth="1.200" />
        <MiniNote x={589.500} y={689} top={15} />
        <path d="M577.500 711v10l3.500-1v6M577.500 716l3.500-1v6" fill="none" stroke="#000" strokeWidth="1.200" />
        <MiniNote x={589.500} y={718} top={15} />
        <path d="M577.500 745.500l5 5M582.500 745.500l-5 5" stroke="#000" strokeWidth="2" />
        <MiniNote x={589.500} y={748} top={15} />
      </svg>
    </Palette>
  );
}

/* ---------- Score ---------- */

function Head({ x, y }: { x: number; y: number }) {
  return <ellipse cx={x} cy={y} rx="6.200" ry="4.200" transform={`rotate(-25 ${x} ${y})`} />;
}
function Up({ x, y, top, flags = 0, step = 8.500 }: { x: number; y: number; top: number; flags?: number; step?: number }) {
  const sx = x + 5.700;
  return (
    <g>
      <Head x={x} y={y} />
      <rect x={sx - 0.300} y={top} width="1" height={y - top} />
      {Array.from({ length: flags }, (_, i) =>
        flags === 1 ? (
          <path key={i} d={`M${sx} ${top}c0.500 6 9.500 12 8.500 18c0 3-0.500 6-2 8.500c1.500-8-1-12-6.500-17.500z`} />
        ) : (
          <path key={i} d={`M${sx} ${top + i * step}c0.500 5 8.500 9 8 16c0 3-0.500 5-1.500 7.500c0.500-8-2-12-6.500-18z`} />
        )
      )}
    </g>
  );
}
function Down({ x, y, bottom, flag = false }: { x: number; y: number; bottom: number; flag?: boolean }) {
  const sx = x - 5.500;
  return (
    <g>
      <Head x={x} y={y} />
      <rect x={sx - 0.500} y={y} width="1" height={bottom - y} />
      {flag && <path d={`M${sx} ${bottom}c0.500-6 11.500-11 11-18c0-3-1-5-2-8c1 9-0.500 12-9 17z`} />}
    </g>
  );
}
function Rest({ x, y, n = 1 }: { x: number; y: number; n?: number }) {
  const tail = 16 + (n - 1) * 9;
  const slope = 0.280;
  return (
    <g>
      <path d={`M${x + 8} ${y}L${x + 8 - tail * slope} ${y + tail}`} stroke="#000" strokeWidth="1.200" />
      {Array.from({ length: n }, (_, i) => {
        const dx = x - i * 2.700;
        const dy = y + i * 9;
        return (
          <g key={i}>
            <circle cx={dx + 2} cy={dy + 2} r="2.300" />
            <path d={`M${dx + 2} ${dy + 4.200}q4 0.500 6-4`} fill="none" stroke="#000" strokeWidth="1.200" />
          </g>
        );
      })}
    </g>
  );
}

const eighthRests = [726.500, 998.500, 1169.500, 1193.500, 1241.500];
const ledgers: [number, number, number][] = [
  [938, 586, 18], [969, 586, 18], [969, 595, 18], [1017, 586, 18], [1017, 595, 18], [1017, 604, 18], [1040, 586, 18], [1040, 595, 18], [1063, 586, 18],
  [825, 574, 10], [884, 587, 10], [973, 605, 10],
];

function Score() {
  return (
    <svg width="656" height="280" viewBox="605 470 656 280" className="block">
      <defs>
        <filter id="paper" x="0" y="0" width="100%" height="100%">
          <feTurbulence type="fractalNoise" baseFrequency="0.120 0.350" numOctaves="3" seed="4" />
          <feColorMatrix values="0 0 0 0 0.500  0 0 0 0 0.500  0 0 0 0 0.500  0.600 0 0 0 -0.200" />
        </filter>
      </defs>
      <rect x="605" y="470" width="656" height="280" fill="#d2d2d2" />
      <rect x="605" y="470" width="656" height="280" filter="url(#paper)" />
      <ellipse cx="706" cy="547" rx="10" ry="8" fill="#fdbe34" />
      <ellipse cx="978" cy="596" rx="10" ry="8" fill="#fdbe34" />
      <g shapeRendering="crispEdges">
        {[542, 551, 560, 569, 578].map((y) => <rect key={y} x="651" y={y} width="610" height="1" />)}
        {[652, 926, 1127].map((x) => <rect key={x} x={x} y="542" width="1" height="37" />)}
        {ledgers.map(([x, y, w]) => <rect key={`${x}-${y}`} x={x} y={y} width={w} height="1" />)}
        <rect x="859" y="542" width="36" height="6" />
      </g>
      <TrebleClef transform="translate(530 440) scale(0.3333)" />
      <Down x={706} y={547} bottom={582} flag />
      {eighthRests.map((x) => <Rest key={x} x={x} y={554} />)}
      <Rest x={752} y={553} n={2} />
      <Down x={776} y={555.700} bottom={588} />
      <Rest x={806} y={553} n={2} />
      <Up x={830} y={565} top={535} flags={1} />
      <Up x={853.700} y={574} top={543} />
      <circle cx="866" cy="574" r="2" />
      <Up x={888.700} y={578} top={543} />
      <circle cx="901" cy="574" r="2" />
      <Up x={946.700} y={587} top={557} />
      <Up x={978} y={596} top={561} flags={1} />
      <Rest x={1027} y={545} n={3} />
      <Up x={1025.700} y={605} top={555} flags={4} />
      <Rest x={1050} y={545} n={3} />
      <Up x={1048.700} y={596} top={546} flags={4} />
      <Up x={1071.700} y={587} top={556} flags={2} step={7} />
      <circle cx="1084.700" cy="582.700" r="2" />
      <Up x={1101} y={578} top={548} flags={1} />
      <Up x={1149} y={574} top={544} flags={1} />
      <Down x={1220.700} y={556} bottom={591} flag />
      <circle cx="1220.700" cy="547" r="2" />
    </svg>
  );
}

function BarRuler() {
  return (
    <svg width="658" height="27" viewBox="603 443 658 27" className="block" shapeRendering="crispEdges">
      <rect x="603" y="443" width="658" height="15" fill="#eeeeee" />
      <rect x="621" y="443" width="640" height="1" />
      <rect x="603" y="458" width="658" height="10" fill="#777" />
      {[717, 786, 854, 973, 1024, 1074, 1196].map((x) => <rect key={x} x={x} y="465" width="1" height="3" fill="#fff" />)}
      {[[649, "2"], [923, "3"], [1124, "4"]].map(([x, t]) => (
        <g key={t}>
          <rect x={x} y="443" width="1" height="15" />
          <rect x={x} y="460" width="1" height="8" fill="#fff" />
          <text x={Number(x) + 4} y="455" className="font-['DejaVu_Sans',sans-serif] text-[13px]">{t}</text>
        </g>
      ))}
      <rect x="603" y="468" width="658" height="2" fill="#000060" />
    </svg>
  );
}

const menus: [string, string, string, string][] = [
  ["", "F", "ile", "w-[31px]"], ["", "E", "dit", "w-[36px]"], ["", "V", "iew", "w-[40px]"], ["", "C", "omposition", "w-[85px]"],
  ["Seg", "m", "ent", "w-[67px]"], ["N", "o", "te", "w-[40px]"], ["", "P", "hrase", "w-[52px]"], ["Ad", "j", "ust", "w-[50px]"],
  ["", "M", "ove", "w-[43px]"], ["", "T", "ools", "w-[40px]"], ["", "H", "elp", "w-[40px]"],
];

function RosegardenWindow() {
  return (
    <section className="w-[728px] overflow-hidden rounded-tl-md bg-[#3c3b37]">
      <header className="flex h-[27px] items-center bg-linear-to-b from-[#5d5c56] via-[#403f3a] to-[#3c3b37] pt-px pl-[10px] font-['DejaVu_Sans',sans-serif] text-[13px] font-bold text-[#dfd8c8]">
        <WindowButtons kinds={["close", "min", "max"]} active />
        <h1 className="ml-[11px] tracking-[0.26px]">*Untitled - Segment Track #1 - Notation</h1>
      </header>
      <nav className="flex h-[23px] items-center bg-[#404040] pl-[8px] text-[13px] text-white">
        {menus.map(([a, b, c, w]) => (
          <span key={b + c} className={`shrink-0 whitespace-nowrap ${w}`}>{a}<u>{b}</u>{c}</span>
        ))}
      </nav>
      <ToolbarMain />
      <ToolbarLayout />
      <div className="flex h-[307px] bg-black">
        <DurationPalette />
        <i className="w-[2px] shrink-0 bg-black" />
        <div className="w-[33px] shrink-0 overflow-hidden"><AccidentalPalette /></div>
        <i className="w-px shrink-0 bg-black" />
        <div className="w-[658px] shrink-0">
          <BarRuler />
          <div className="border-l-2 border-[#000060]"><Score /></div>
        </div>
      </div>
    </section>
  );
}

export default function App() {
  return (
    <div className="flex h-[750px] w-[1261px] overflow-hidden bg-[#e6e2da] font-['DejaVu_Sans_Condensed','DejaVu_Sans',sans-serif]">
      <PdWindow />
      <div className="flex w-[733px] flex-col">
        <JackWindow />
        <div className="flex h-[2px] bg-[#d8d4d0]">
          <i className="ml-[590px] h-[2px] w-[54px] bg-black" />
        </div>
        <div className="flex h-[427px]">
          <div className="flex w-[5px] shrink-0 flex-col border-r border-l border-[#8d8069]">
            <i className="h-[181px] bg-[#d9d9d9]" />
            <i className="h-[2px] bg-[#858585]" />
            <i className="h-[35px] bg-[#f8eef0]" />
            <i className="h-[28px] bg-black" />
            <i className="h-[68px] bg-[#f8eef0]" />
            <i className="h-[12px] bg-black" />
            <i className="flex-1 bg-[#f8eef0]" />
          </div>
          <RosegardenWindow />
        </div>
      </div>
    </div>
  );
}
